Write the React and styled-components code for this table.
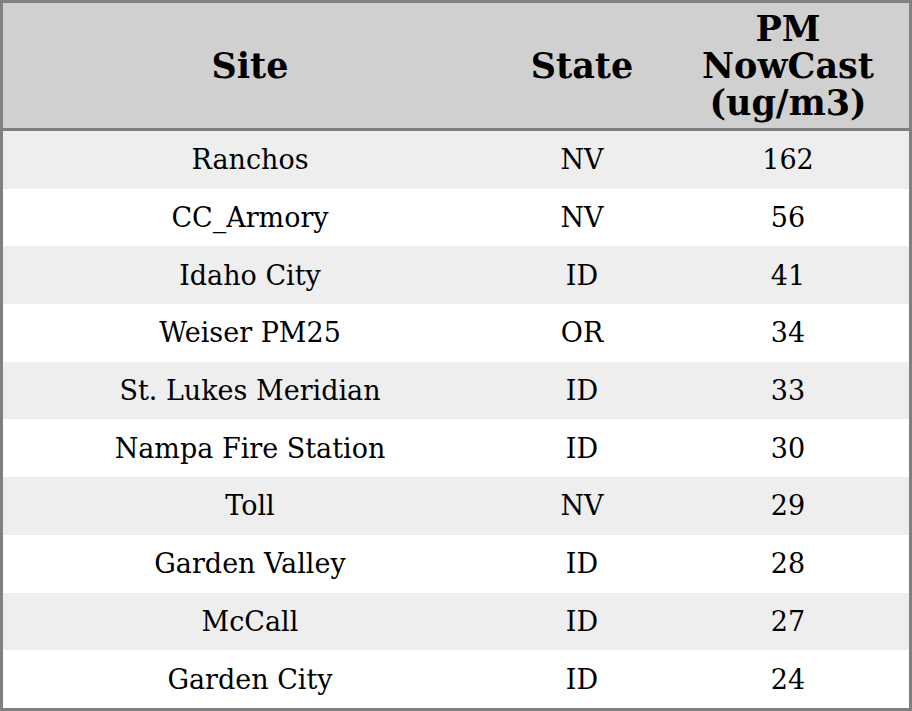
import React from "react";
import styled, { createGlobalStyle } from "styled-components";

const GlobalStyle = createGlobalStyle`
  html, body {
    margin: 0;
    padding: 0;
    background: #ffffff;
  }
`;

const Table = styled.table`
  width: 912px;
  border: 3px solid #808080;
  border-spacing: 0;
  table-layout: fixed;
  font-family: "DejaVu Serif", serif;
  color: #000;
`;

const HeadCell = styled.th`
  width: ${props => props.width}px;
  height: 128px;
  padding: 0 10px;
  box-sizing: border-box;
  background: #d0d0d0;
  border-bottom: 3px solid #808080;
  font-size: 35px;
  line-height: 37px;
  font-weight: bold;
  text-align: center;
  vertical-align: middle;
`;

const Row = styled.tr`
  height: 57.7px;
  background: ${props => (props.striped ? "#eeeeee" : "#ffffff")};
`;

const Cell = styled.td`
  padding: 0;
  font-size: 27px;
  text-align: center;
  vertical-align: middle;
`;

const sites = [
  ["Ranchos", "NV", 162],
  ["CC_Armory", "NV", 56],
  ["Idaho City", "ID", 41],
  ["Weiser PM25", "OR", 34],
  ["St. Lukes Meridian", "ID", 33],
  ["Nampa Fire Station", "ID", 30],
  ["Toll", "NV", 29],
  ["Garden Valley", "ID", 28],
  ["McCall", "ID", 27],
  ["Garden City", "ID", 24]
];

const App = () => {
  return (
    <>
      <GlobalStyle />
      <Table>
        <thead>
          <tr>
            <HeadCell width={494}>Site</HeadCell>
            <HeadCell width={170}>State</HeadCell>
            <HeadCell width={242}>
              PM
              <br />
              NowCast
              <br />
              (ug/m3)
            </HeadCell>
          </tr>
        </thead>
        <tbody>
          {sites.map(([site, state, value], i) => (
            <Row key={site} striped={i % 2 === 0}>
              <Cell>{site}</Cell>
              <Cell>{state}</Cell>
              <Cell>{value}</Cell>
            </Row>
          ))}
        </tbody>
      </Table>
    </>
  );
};

export default App;
